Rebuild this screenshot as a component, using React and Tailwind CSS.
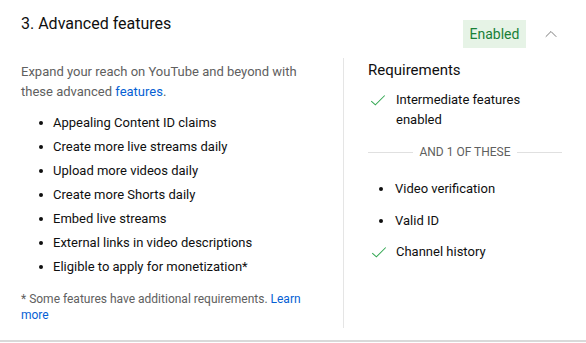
import { ChevronUp } from "lucide-react";

const features = [
  "Appealing Content ID claims",
  "Create more live streams daily",
  "Upload more videos daily",
  "Create more Shorts daily",
  "Embed live streams",
  "External links in video descriptions",
  "Eligible to apply for monetization*",
];

function Check() {
  return (
    <svg width="18" height="18" viewBox="0 0 24 24" className="shrink-0">
      <path d="M3 13.5l5.5 5L21 6" fill="none" stroke="#34a853" strokeWidth="1.4" />
    </svg>
  );
}

export default function App() {
  return (
    <div className="w-[586px] h-[343px] bg-white font-['Roboto',sans-serif] overflow-hidden">
      <div className="border-b-2 border-[#d9d9d9] h-[342px]">
        {/* header */}
        <div className="flex items-start justify-between pl-[21px] pr-[23px] pt-[12px]">
          <h2 className="text-[16px] leading-[24px] text-[#0f0f0f]">3. Advanced features</h2>
          <div className="flex items-center mt-[8px]">
            <span className="h-[28px] w-[63px] flex items-center justify-center bg-[#e6f3e6] text-[#188038] text-[14px]">
              Enabled
            </span>
            <span className="w-[24px] h-[24px] ml-[13px] flex items-center justify-center text-[#707070]">
              <ChevronUp size={20} strokeWidth={1.1} />
            </span>
          </div>
        </div>

        {/* body */}
        <div className="flex mt-[10px]">
          <div className="w-[343px] pl-[21px] pr-[24px] pt-[4px] pb-[5px]">
            <p className="text-[13px] leading-[20px] text-[#606060]">
              Expand your reach on YouTube and beyond with these advanced{" "}
              <span className="text-[#065fd4]">features</span>.
            </p>
            <ul className="mt-[9px]">
              {features.map((f) => (
                <li key={f} className="flex items-center h-[24px] text-[13px] text-[#0f0f0f]">
                  <span className="w-[4px] h-[4px] rounded-full bg-[#0f0f0f] ml-[18px] mr-[10px]" />
                  {f}
                </li>
              ))}
            </ul>
            <p className="mt-[12px] text-[12px] leading-[16px] text-[#606060]">
              * Some features have additional requirements.{" "}
              <span className="text-[#065fd4]">Learn more</span>
            </p>
          </div>

          <div className="flex-1 border-l border-[#e5e5e5] pl-[24px] pr-[24px]">
            <h3 className="text-[15px] leading-[24px] text-[#0f0f0f]">Requirements</h3>
            <div className="flex items-start mt-[8px]">
              <span className="mt-[1px] ml-[1px] mr-[9px]"><Check /></span>
              <span className="text-[13px] leading-[20px] text-[#0f0f0f]">
                Intermediate features
                <br />
                enabled
              </span>
            </div>
            <div className="flex items-center gap-[6px] mt-[14px] text-[12px] leading-[16px] text-[#606060]">
              <div className="flex-1 h-px bg-[#e0e0e0]" />
              <span>AND 1 OF THESE</span>
              <div className="flex-1 h-px bg-[#e0e0e0]" />
            </div>
            <div className="mt-[17px] flex flex-col">
              <div className="flex items-center h-[24px] text-[13px] text-[#0f0f0f]">
                <span className="w-[4px] h-[4px] rounded-full bg-[#0f0f0f] ml-[11px] mr-[12px]" />
                Video verification
              </div>
              <div className="flex items-center h-[24px] mt-[8px] text-[13px] text-[#0f0f0f]">
                <span className="w-[4px] h-[4px] rounded-full bg-[#0f0f0f] ml-[11px] mr-[12px]" />
                Valid ID
              </div>
              <div className="flex items-center h-[24px] mt-[7px] text-[13px] text-[#0f0f0f]">
                <span className="ml-[2px] mr-[8px]"><Check /></span>
                Channel history
              </div>
            </div>
          </div>
        </div>
      </div>
    </div>
  );
}
